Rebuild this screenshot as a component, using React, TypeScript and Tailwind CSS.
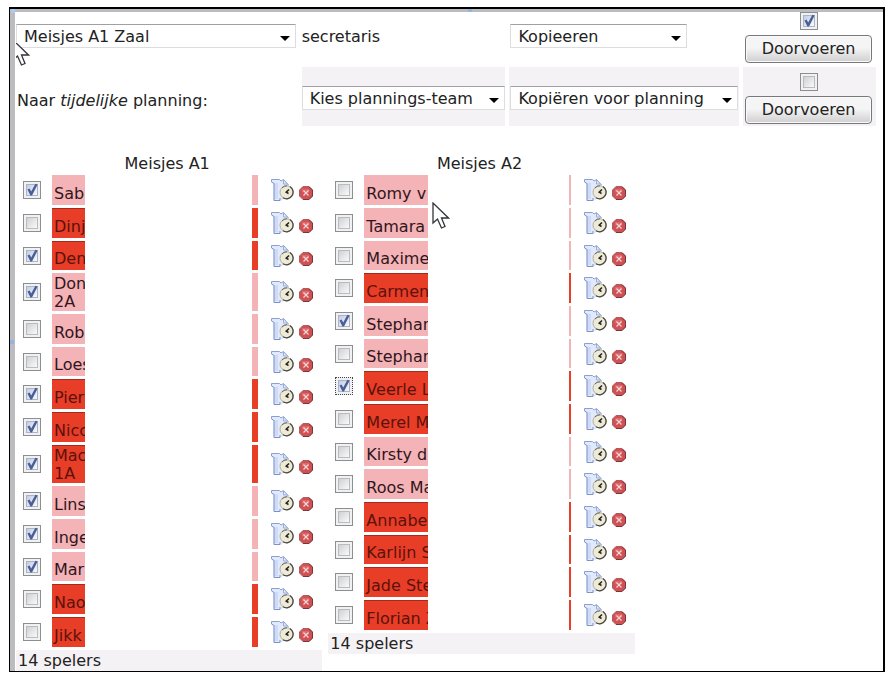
import { useState } from "react";
import clsx from "clsx";

type Tone = "pink" | "red";

interface Player {
  name: string;
  suffix?: string;
  tone: Tone;
  checked?: boolean;
  focused?: boolean;
}

const teamA1: Player[] = [
  { name: "Sab", tone: "pink", checked: true },
  { name: "Dinj", tone: "red" },
  { name: "Den", tone: "red", checked: true },
  { name: "Don", suffix: "2A", tone: "pink", checked: true },
  { name: "Rob", tone: "pink" },
  { name: "Loes", tone: "pink" },
  { name: "Pier", tone: "red", checked: true },
  { name: "Nicc", tone: "red", checked: true },
  { name: "Mac", suffix: "1A", tone: "red", checked: true },
  { name: "Lins", tone: "pink", checked: true },
  { name: "Inge", tone: "pink", checked: true },
  { name: "Mar", tone: "pink", checked: true },
  { name: "Nao", tone: "red" },
  { name: "Jikk", tone: "red" },
];

const teamA2: Player[] = [
  { name: "Romy v", tone: "pink" },
  { name: "Tamara", tone: "pink" },
  { name: "Maxime", tone: "pink" },
  { name: "Carmen", tone: "red" },
  { name: "Stephan", tone: "pink", checked: true },
  { name: "Stephan", tone: "pink" },
  { name: "Veerle L", tone: "red", checked: true, focused: true },
  { name: "Merel M", tone: "red" },
  { name: "Kirsty d", tone: "pink" },
  { name: "Roos Ma", tone: "pink" },
  { name: "Annabe", tone: "red" },
  { name: "Karlijn S", tone: "red" },
  { name: "Jade Ste", tone: "red" },
  { name: "Florian Z", tone: "red" },
];

function Checkbox({ label, defaultChecked, focused }: { label: string; defaultChecked?: boolean; focused?: boolean }) {
  const [checked, setChecked] = useState(!!defaultChecked);

  return (
    <label className="relative block h-[18px] w-[18px]">
      <input
        type="checkbox"
        aria-label={label}
        checked={checked}
        onChange={(e) => setChecked(e.target.checked)}
        className={clsx(
          "block h-[18px] w-[18px] appearance-none border bg-[#f1f1f2]",
          focused ? "border-dotted border-[#444]" : "border-[#8d8e90]"
        )}
      />
      <span
        className={clsx(
          "pointer-events-none absolute inset-[3px] border bg-linear-to-br to-[#fafafa]",
          checked ? "border-[#a9b4cc] from-[#c3cde4]" : "border-[#b9bbbf] from-[#cfd1d4]"
        )}
      />
      {checked && (
        <svg viewBox="0 0 18 18" className="pointer-events-none absolute inset-0 h-[18px] w-[18px]">
          <path d="M4.5 8.4 6.6 7.4 8.2 10.4 12.4 2.8 14.6 3.4 9 14.6 7.4 14.6Z" fill="#4a5f96" />
        </svg>
      )}
    </label>
  );
}

function SelectBox({ label, value, className }: { label: string; value: string; className?: string }) {
  return (
    <div className={clsx("relative", className)}>
      <select
        aria-label={label}
        className="block h-6 w-full appearance-none border border-[#dddddf] border-t-[#a0a0a4] bg-white pt-px pr-5 pl-[7px] leading-[20px]"
      >
        <option>{value}</option>
      </select>
      <svg viewBox="0 0 10 5" className="pointer-events-none absolute top-[12px] right-[6px] h-[5px] w-[10px]">
        <path d="M0 0H10L5 5Z" fill="#000" />
      </svg>
    </div>
  );
}

function SubmitCell({ label, defaultChecked, className }: { label: string; defaultChecked?: boolean; className?: string }) {
  return (
    <div className={clsx("flex flex-col items-center pr-1 pl-[2px]", className)}>
      <Checkbox label={label} defaultChecked={defaultChecked} />
      <button
        type="button"
        className="mt-[5px] h-7 w-full rounded-[4px] border border-[#77787c] bg-linear-to-b from-[#f5f5f5] from-45% to-[#cfcfd0] leading-[26px] shadow-[inset_0_0_0_1px_#fafafa]"
      >
        Doorvoeren
      </button>
    </div>
  );
}

function ShirtClockIcon() {
  return (
    <svg viewBox="0 0 24 24" className="h-6 w-6">
      <path d="M1 1.5 9 1 11 3 13.5 1.5 19 7V12L12 22.5H3.5V6L2.5 5Z" fill="#e1e9fc" />
      <path d="M4 5H8V21H4Z" fill="#cfdaf7" />
      <path d="M1.5 4V1.5H9.5L11 3 13.5 1.5 18.5 7" fill="none" stroke="#8b9fd0" />
      <path d="M1.5 4 4 5.5V22.5H10V20" fill="none" stroke="#7d90c4" />
      <path d="M13.5 2V6H18" fill="none" stroke="#9aaddd" />
      <circle cx="16.5" cy="14.2" r="6.5" fill="#eeead8" stroke="#b5af98" />
      <path d="M20 8.6A6.6 6.6 0 0 1 13 19.8" fill="none" stroke="#4b4841" strokeWidth="1.3" />
      <path d="M12 10A6.3 6.3 0 0 1 17 7.8" fill="none" stroke="#6b675d" />
      <path d="M19 11.5 16.2 14.2 18.5 15.5" fill="none" stroke="#25231f" strokeWidth="1.5" />
    </svg>
  );
}

function DeleteIcon() {
  return (
    <svg viewBox="0 0 14 14" className="h-[14px] w-[14px]">
      <path d="M4 .5H10L13.5 4V10L10 13.5H4L.5 10V4Z" fill="#cf5154" stroke="#ad5c60" />
      <path d="M10 1 13.5 4V10L10 13.5H4" fill="none" stroke="#7c3639" />
      <path d="M3 3H10V6.5H3Z" fill="#e27c7e" opacity=".6" />
      <path d="M4.5 4.5 9.5 9.5M9.5 4.5 4.5 9.5" stroke="#f6d5d5" strokeWidth="1.2" />
    </svg>
  );
}

function CursorIcon({ className }: { className: string }) {
  return (
    <svg viewBox="0 0 18 28" className={className}>
      <path
        d="M1 1V21L5.5 17 9.5 26 13 24.5 9.5 16H16.5Z"
        fill="#fff"
        stroke="#33343c"
        strokeWidth="1.3"
      />
    </svg>
  );
}

interface TeamTableProps {
  title: string;
  players: Player[];
  nameClass: string;
  edgeClass: string;
}

function TeamTable({ title, players, nameClass, edgeClass }: TeamTableProps) {
  return (
    <table className="w-full table-fixed border-collapse">
      <colgroup>
        <col className="w-9" />
        <col />
        <col className="w-16" />
      </colgroup>
      <thead>
        <tr>
          <th colSpan={3} className="h-[23px] p-0 pr-1 text-center leading-[23px] font-normal">
            {title}
          </th>
        </tr>
      </thead>
      <tbody>
        {players.map((player, i) => (
          <tr key={i} className={player.suffix ? "h-[41px]" : "h-[33px] nth-[3n]:h-8"}>
            <td className="pt-0 pr-0 pb-[3px] pl-[7px]">
              <Checkbox label={player.name} defaultChecked={player.checked} focused={player.focused} />
            </td>

            {/* Name, with the rest of it blanked out */}
            <td className="h-px p-0 pb-[3px]">
              <div className="flex h-full">
                <div
                  className={clsx(
                    "flex shrink-0 flex-col justify-end overflow-hidden pl-[2px] whitespace-nowrap",
                    nameClass,
                    player.tone === "red"
                      ? "border-t border-[#a32a1c] bg-[#e83d27] text-[#5c120c]"
                      : "bg-[#f4b3b6] text-[#30161c]"
                  )}
                >
                  <span className={player.suffix ? "leading-[18px]" : "leading-[22px]"}>{player.name}</span>
                  {player.suffix && <span className="leading-[18px]">{player.suffix}</span>}
                </div>
                <div className="flex-1" />
                <div className={clsx("shrink-0", edgeClass, player.tone === "red" ? "bg-[#e83d27]" : "bg-[#f4b3b6]")} />
              </div>
            </td>

            <td className="p-0 pb-[3px]">
              <div className="flex items-center gap-[5px] pl-3">
                <ShirtClockIcon />
                <button type="button" aria-label="Verwijderen" className="mt-[6px]">
                  <DeleteIcon />
                </button>
              </div>
            </td>
          </tr>
        ))}
      </tbody>
      <tfoot>
        <tr>
          <td colSpan={3} className="h-[21px] bg-[#f5f2f5] p-0 pl-[2px] leading-[21px]">
            {players.length} spelers
          </td>
        </tr>
      </tfoot>
    </table>
  );
}

export default function App() {
  return (
    <div className="bg-white px-[9px] pt-[7px] pb-2 font-['DejaVu_Sans',sans-serif] text-base text-[#222]">
      <div className="relative border-t-2 border-r-2 border-b border-l border-black">
        <div className="border-t-[3px] border-l-[5px] border-[#bcbcc0] pl-px">
          {/* Copy actions */}
          <div className="grid grid-cols-[282fr_204fr_230fr_133fr] gap-x-1 pr-[7px]">
            <SelectBox label="Team" value="Meisjes A1 Zaal" className="mt-3 mr-[2px]" />
            <span className="mt-3 leading-[26px]">secretaris</span>
            <SelectBox label="Actie" value="Kopieeren" className="mt-3 mr-[52px] ml-[1px]" />
            <SubmitCell label="Doorvoeren" defaultChecked />

            <span className="mt-[26px] pl-px leading-[24px]">
              Naar <i>tijdelijke</i> planning:
            </span>
            <div className="mt-1 bg-[#f5f2f5] pt-[19px]">
              <SelectBox label="Planningsteam" value="Kies plannings-team" />
            </div>
            <div className="mt-1 bg-[#f5f2f5] px-px pt-[19px]">
              <SelectBox label="Planning" value="Kopiëren voor planning" />
            </div>
            <SubmitCell label="Doorvoeren planning" className="mt-1 bg-[#f5f2f5] pt-[6px] pb-[2px]" />
          </div>

          {/* Teams */}
          <div className="mt-[26px] grid grid-cols-[306fr_306fr_242fr] items-start gap-x-[6px]">
            <TeamTable title="Meisjes A1" players={teamA1} nameClass="w-[33px]" edgeClass="w-[6px]" />
            <TeamTable title="Meisjes A2" players={teamA2} nameClass="w-16" edgeClass="w-[2px]" />
          </div>
        </div>

        {/* Splitter marks in the window edge */}
        <span className="absolute top-0 left-px h-1 w-1 bg-[#a9cdee]" />
        <span className="absolute top-0 left-[52.5%] h-[3px] w-1 bg-[#8fb5e0]" />
        <span className="absolute top-1/2 left-0 h-1 w-1 bg-[#8fb5e0]" />

        {/* Mouse pointers, the first one half outside the page area */}
        <div className="pointer-events-none absolute top-[34px] left-[6px] h-6 w-[14px] overflow-hidden">
          <CursorIcon className="-mt-1 -ml-1 h-7 w-[18px] max-w-none" />
        </div>
        <CursorIcon className="pointer-events-none absolute top-[193px] left-[422px] h-7 w-[18px]" />
      </div>
    </div>
  );
}
